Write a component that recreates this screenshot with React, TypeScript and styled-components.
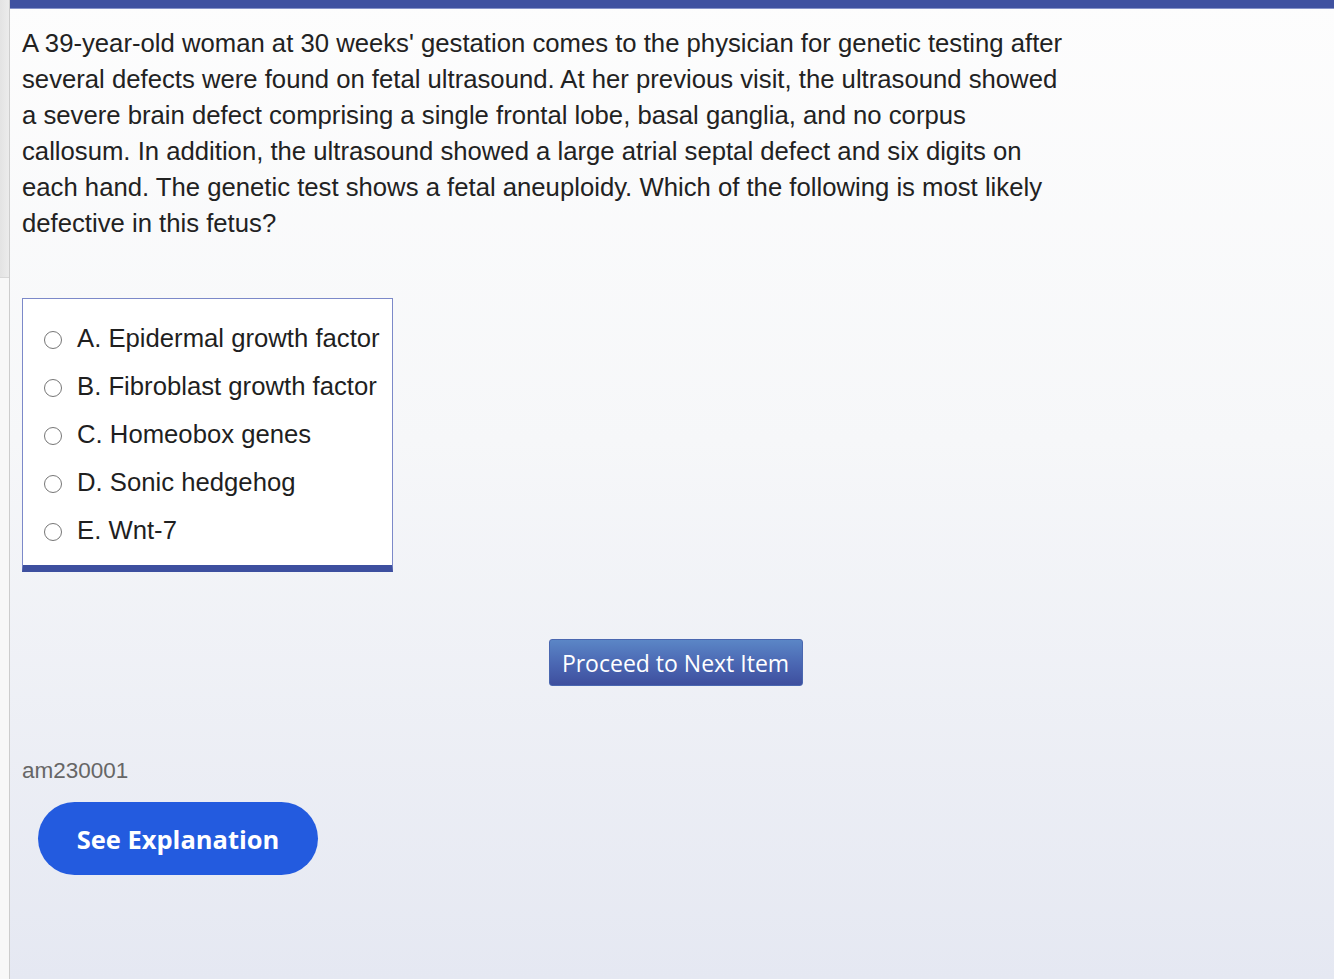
import React from "react";
import styled, { createGlobalStyle } from "styled-components";

const Global = createGlobalStyle`
  html, body { margin: 0; padding: 0; height: 100%; }
  body { font-family: "Liberation Sans", Arial, sans-serif; }
  #root { height: 100%; }
`;

const Page = styled.div`
  display: flex;
  height: 979px;
  width: 1334px;
  overflow: hidden;
`;

const Gutter = styled.div`
  width: 9px;
  flex: none;
  background: #f8f8f8;
  border-right: 1px solid #cdcdcd;
  display: flex;
  flex-direction: column;
`;

const GutterThumb = styled.div`
  height: 277px;
  background: linear-gradient(90deg, #e3e3e3, #ececec);
  border-bottom: 1px solid #d8d8d8;
`;

const Main = styled.div`
  flex: 1;
  display: flex;
  flex-direction: column;
  background: linear-gradient(180deg, #fdfdfd 0%, #f6f7f9 45%, #e5e8f2 100%);
`;

const TopBar = styled.div`
  height: 8px;
  flex: none;
  background: #3f51a0;
  border-bottom: 1px solid #8592c8;
`;

const Content = styled.div`
  padding: 16px 0 0 12px;
  display: flex;
  flex-direction: column;
`;

const Stem = styled.p`
  margin: 0;
  width: 1046px;
  font-size: 25.7px;
  line-height: 36px;
  color: #222;
`;

const Choices = styled.div`
  box-sizing: border-box;
  margin-top: 57px;
  width: 371px;
  border: 1px solid #7c89c9;
  border-bottom: 7px solid #3d4f9f;
  background: #fff;
  padding: 15px 0 11px 21px;
  display: flex;
  flex-direction: column;
`;

const Choice = styled.label`
  display: flex;
  align-items: center;
  height: 48px;
  font-size: 25.7px;
  color: #1f1f1f;
  cursor: pointer;
  white-space: nowrap;
`;

const Radio = styled.span`
  width: 16px;
  height: 16px;
  border: 1.5px solid #767676;
  border-radius: 50%;
  background: #fff;
  margin-top: 4px;
  margin-right: 15px;
  flex: none;
`;

const NextRow = styled.div`
  display: flex;
  justify-content: center;
  padding-right: 5px;
  margin-top: 67px;
`;

const NextButton = styled.button`
  width: 254px;
  height: 47px;
  border: 1px solid #4a67b0;
  border-radius: 3px;
  background: linear-gradient(180deg, #5b86c6 0%, #4a66b2 55%, #3e4f9e 100%);
  color: #fff;
  font-family: "Open Sans", sans-serif;
  font-size: 23px;
  padding: 0;
`;

const ItemId = styled.div`
  margin-top: 72px;
  font-size: 22.5px;
  color: #666;
`;

const ExplainButton = styled.button`
  margin: 18px 0 0 16px;
  width: 280px;
  height: 73px;
  border: none;
  border-radius: 37px;
  background: #235bdf;
  color: #fff;
  font-family: "Open Sans", sans-serif;
  font-weight: 700;
  font-size: 25.5px;
  padding: 0;
  align-self: flex-start;
`;

const options = [
  "A. Epidermal growth factor",
  "B. Fibroblast growth factor",
  "C. Homeobox genes",
  "D. Sonic hedgehog",
  "E. Wnt-7",
];

export default function App() {
  return (
    <>
      <Global />
      <Page>
        <Gutter>
          <GutterThumb />
        </Gutter>
        <Main>
          <TopBar />
          <Content>
            <Stem>
              A 39-year-old woman at 30 weeks' gestation comes to the physician for genetic testing after
              several defects were found on fetal ultrasound. At her previous visit, the ultrasound showed
              a severe brain defect comprising a single frontal lobe, basal ganglia, and no corpus
              callosum. In addition, the ultrasound showed a large atrial septal defect and six digits on
              each hand. The genetic test shows a fetal aneuploidy. Which of the following is most likely
              defective in this fetus?
            </Stem>
            <Choices>
              {options.map((o) => (
                <Choice key={o}>
                  <Radio />
                  {o}
                </Choice>
              ))}
            </Choices>
            <NextRow>
              <NextButton>Proceed to Next Item</NextButton>
            </NextRow>
            <ItemId>am230001</ItemId>
            <ExplainButton>See Explanation</ExplainButton>
          </Content>
        </Main>
      </Page>
    </>
  );
}
